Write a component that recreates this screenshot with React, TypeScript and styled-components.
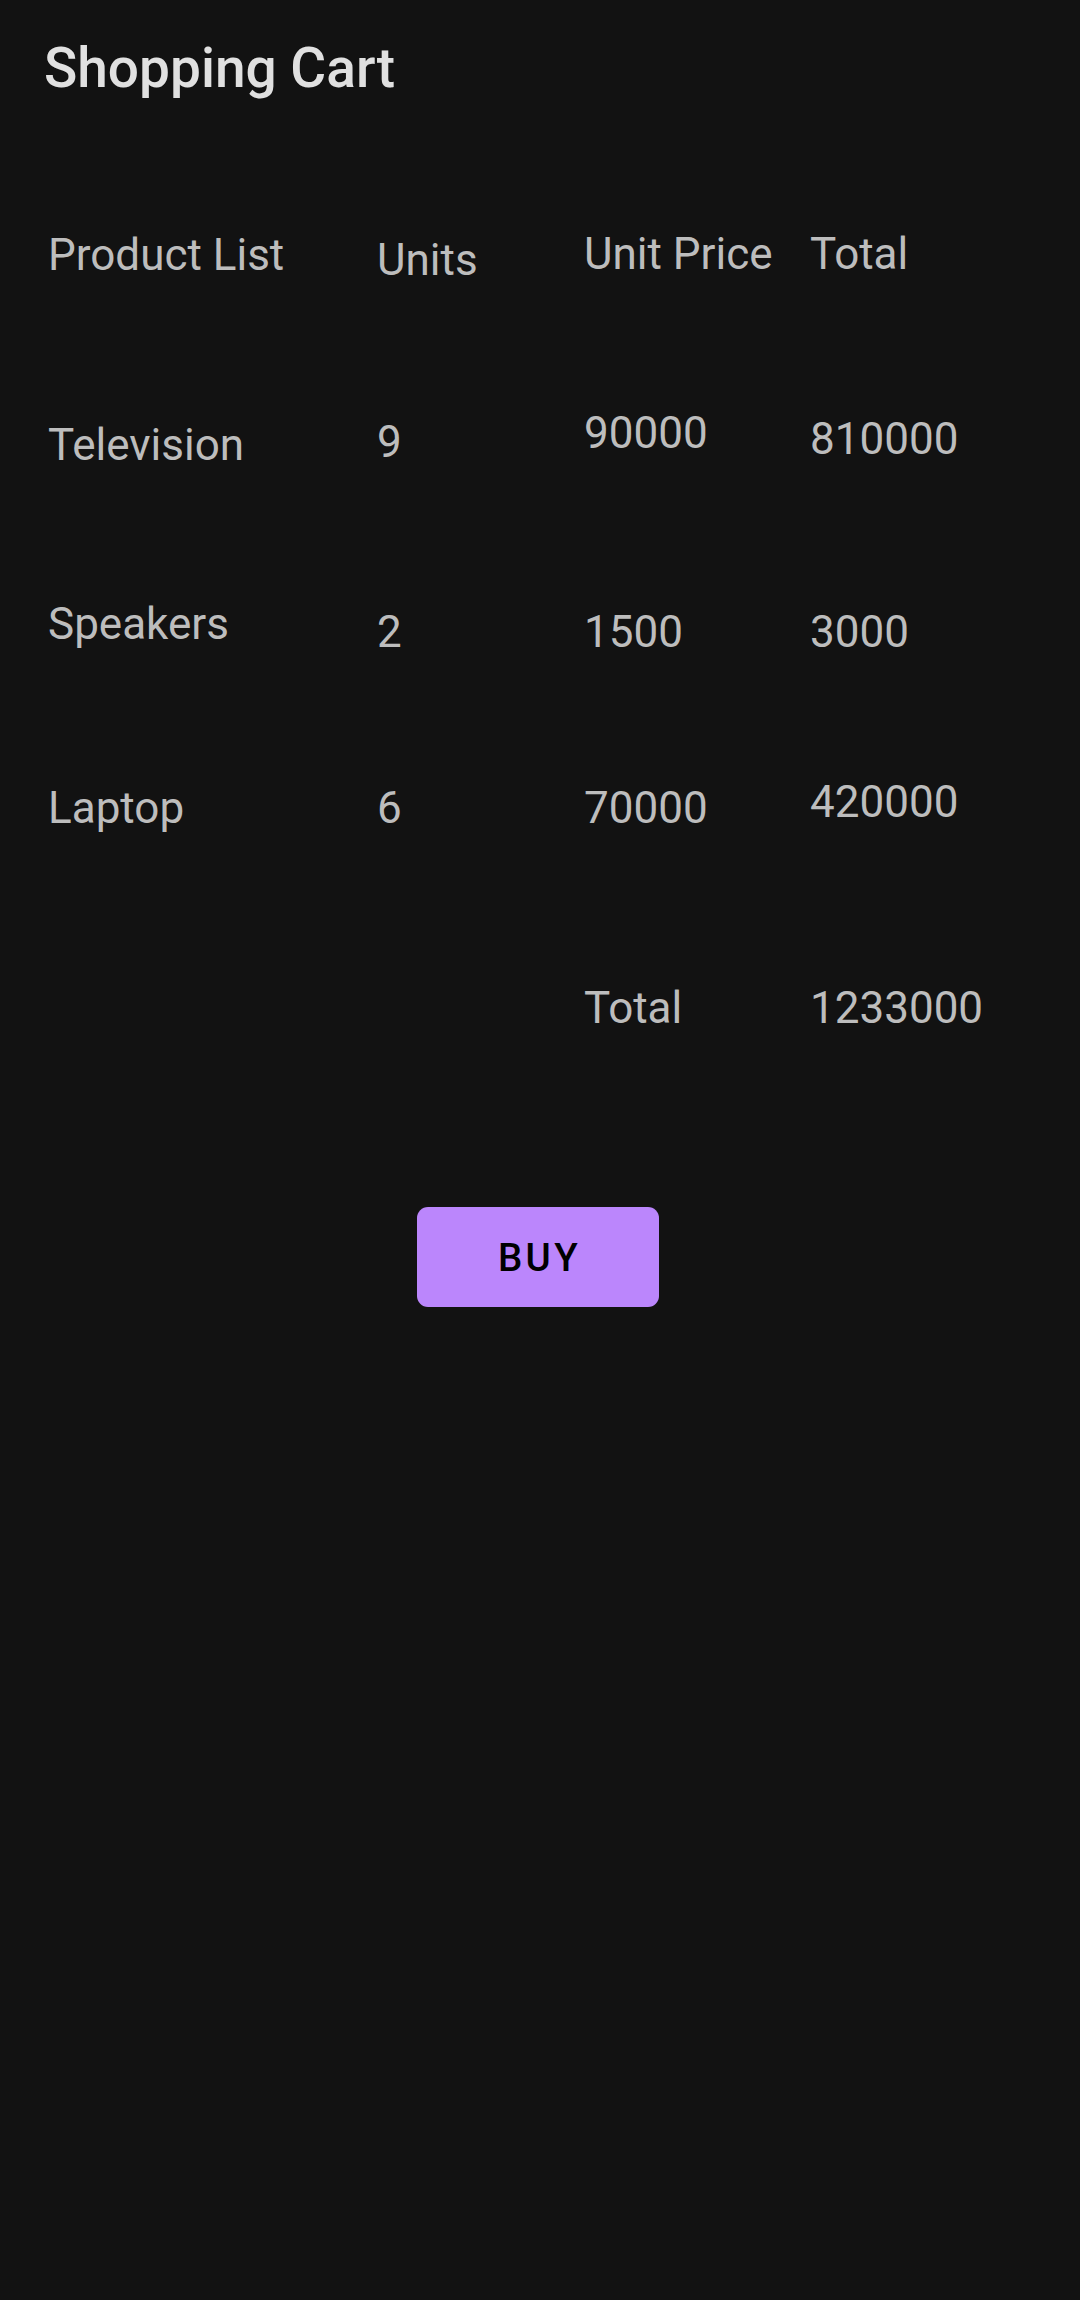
import styled, { createGlobalStyle } from 'styled-components';

const GlobalStyle = createGlobalStyle`
  html,
  body {
    margin: 0;
    padding: 0;
    background: #121212;
  }

  body {
    font-family: Roboto, 'Noto Sans', sans-serif;
  }
`;

const Screen = styled.div`
  min-height: 2300px;
  background: #121212;
  display: flex;
  flex-direction: column;
`;

const Title = styled.h1`
  margin: 0;
  padding: 36px 0 0 44px;
  font-size: 55px;
  line-height: 64px;
  font-weight: 500;
  color: #e0e0e0;
`;

const CartTable = styled.div`
  display: grid;
  grid-template-columns: 329px 207px 226px 1fr;
  grid-template-rows: 179px 191px 178px 206px 52px;
  margin-top: 128px;
  padding-left: 48px;
`;

const Cell = styled.div<{ $offset?: number; $col?: number }>`
  align-self: start;
  padding-top: ${(props) => props.$offset || 0}px;
  grid-column: ${(props) => (props.$col ? `${props.$col}` : 'auto')};
  font-size: 44px;
  line-height: 52px;
  color: #bdbdbd;
  white-space: nowrap;
`;

const ButtonRow = styled.div`
  display: flex;
  justify-content: center;
  padding-right: 4px;
  margin-top: 173px;
`;

const BuyButton = styled.button`
  width: 242px;
  height: 100px;
  border: none;
  border-radius: 11px;
  background: #bb86fc;
  color: #000000;
  font-family: Roboto, sans-serif;
  font-size: 38.5px;
  font-weight: 500;
  letter-spacing: 3.4px;
  display: flex;
  align-items: center;
  justify-content: center;
  padding: 0 0 0 3px;
  cursor: pointer;
`;

const header = [
  { text: 'Product List', offset: 1 },
  { text: 'Units', offset: 6 },
  { text: 'Unit Price', offset: 0 },
  { text: 'Total', offset: 0 },
];

const rows = [
  [
    { text: 'Television', offset: 12 },
    { text: '9', offset: 9 },
    { text: '90000', offset: 0 },
    { text: '810000', offset: 6 },
  ],
  [
    { text: 'Speakers', offset: 0 },
    { text: '2', offset: 8 },
    { text: '1500', offset: 8 },
    { text: '3000', offset: 8 },
  ],
  [
    { text: 'Laptop', offset: 6 },
    { text: '6', offset: 6 },
    { text: '70000', offset: 6 },
    { text: '420000', offset: 0 },
  ],
];

const App = () => {
  return (
    <Screen>
      <GlobalStyle />
      <Title>Shopping Cart</Title>
      <CartTable>
        {header.map((cell) => (
          <Cell key={cell.text} $offset={cell.offset}>
            {cell.text}
          </Cell>
        ))}
        {rows.map((row, i) =>
          row.map((cell, j) => (
            <Cell key={`${i}-${j}`} $offset={cell.offset}>
              {cell.text}
            </Cell>
          ))
        )}
        <Cell $col={3}>Total</Cell>
        <Cell $col={4}>1233000</Cell>
      </CartTable>
      <ButtonRow>
        <BuyButton>BUY</BuyButton>
      </ButtonRow>
    </Screen>
  );
};

export default App;
